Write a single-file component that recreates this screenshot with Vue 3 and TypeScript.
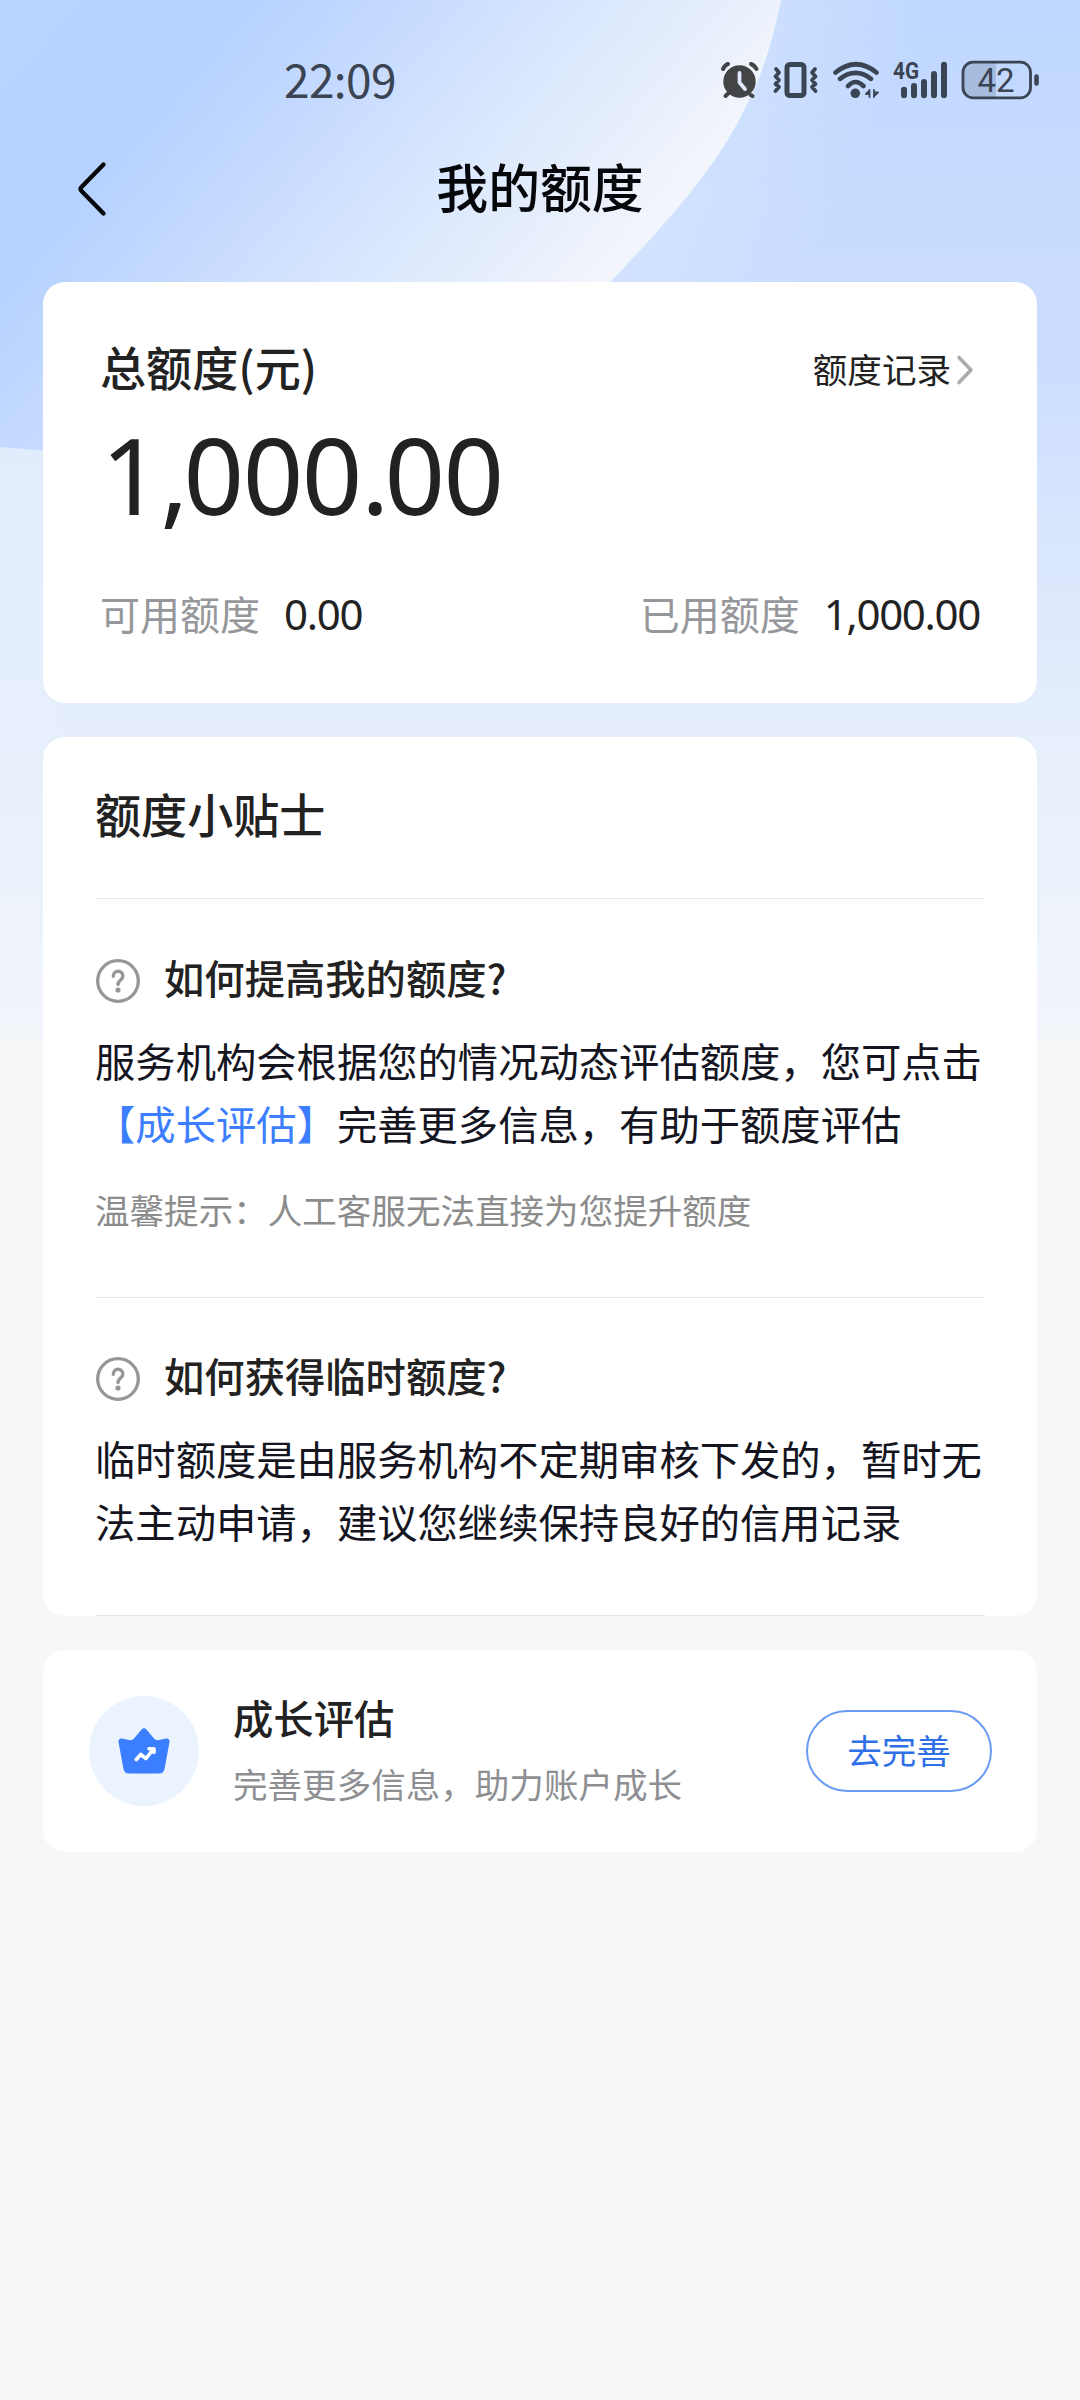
<script setup lang="ts">
interface Tip {
  question: string
  before: string
  link?: string
  after?: string
  note?: string
}

const tips: Tip[] = [
  {
    question: '如何提高我的额度?',
    before: '服务机构会根据您的情况动态评估额度，您可点击',
    link: '【成长评估】',
    after: '完善更多信息，有助于额度评估',
    note: '温馨提示：人工客服无法直接为您提升额度',
  },
  {
    question: '如何获得临时额度?',
    before: '临时额度是由服务机构不定期审核下发的，暂时无法主动申请，建议您继续保持良好的信用记录',
  },
]
</script>

<template>
  <div class="screen">
    <svg class="backdrop" viewBox="0 0 1080 1040" aria-hidden="true">
      <defs>
        <linearGradient id="base" x1="0" y1="0" x2="0" y2="1040" gradientUnits="userSpaceOnUse">
          <stop offset="0" stop-color="#bfd7ff" />
          <stop offset=".2" stop-color="#c8dcff" />
          <stop offset=".35" stop-color="#cbddff" />
          <stop offset=".5" stop-color="#d8e5fd" />
          <stop offset=".72" stop-color="#e7effc" />
          <stop offset="1" stop-color="#f2f5fa" />
        </linearGradient>
        <linearGradient id="edge" x1="650" y1="60" x2="860" y2="160" gradientUnits="userSpaceOnUse">
          <stop offset="0" stop-color="#dbe8fe" stop-opacity=".75" />
          <stop offset="1" stop-color="#dbe8fe" stop-opacity="0" />
        </linearGradient>
        <linearGradient id="sweep" x1="0" y1="0" x2="486" y2="416" gradientUnits="userSpaceOnUse">
          <stop offset="0" stop-color="#b7d3ff" />
          <stop offset=".3" stop-color="#b6d2ff" />
          <stop offset=".5" stop-color="#c7dbff" />
          <stop offset=".66" stop-color="#d6e5fe" />
          <stop offset=".86" stop-color="#e6eefc" />
          <stop offset="1" stop-color="#f2f5fb" />
        </linearGradient>
        <linearGradient id="leftglow" x1="0" y1="440" x2="0" y2="740" gradientUnits="userSpaceOnUse">
          <stop offset="0" stop-color="#e1ecfd" />
          <stop offset="1" stop-color="#e7effc" />
        </linearGradient>
      </defs>
      <rect width="1080" height="1040" fill="url(#base)" />
      <rect x="600" width="480" height="300" fill="url(#edge)" />
      <rect y="440" width="60" height="300" fill="url(#leftglow)" />
      <path d="M0 0H780C771 45 760 78 746.600 103C725 150 690 198 609 282C440 410 220 470 0 447Z" fill="url(#sweep)" />
      <path d="M780 0C771 45 760 78 746.600 103C725 150 690 198 609 282" fill="none" stroke="#f4f7fd" stroke-width="2" stroke-opacity=".8" />
    </svg>

    <header class="status">
      <span class="time">22:09</span>
      <svg class="status-icons" viewBox="0 0 330 44" fill="none" stroke="#3b4452" stroke-linecap="round" stroke-linejoin="round">
        <g>
          <circle cx="19.500" cy="21.500" r="16.200" fill="#434446" stroke="none" />
          <path d="M8.500 33L5.500 36M30.500 35L32.500 36" stroke="#434446" stroke-width="4" />
          <path d="M3 9Q5 5 8 4M31 4Q34 5 36.500 9" stroke="#434446" stroke-width="4" />
          <path d="M19.500 13V22.500L25 29" stroke="#dfe9fb" stroke-width="3.800" />
        </g>
        <rect x="67" y="4.500" width="17" height="31" rx="3" stroke-width="5" />
        <path d="M56 9L59 12.500L55.500 16.500L59 20L55.500 24L59 27L55.500 31M95 9L92 12.500L95.500 16.500L92 20L95.500 24L92 27L95.500 31" stroke-width="3.800" />
        <g stroke-width="4.700">
          <path d="M115.500 12.500Q136 -4 156.500 12.500M120 18.800Q135.500 7 151 18.800M128 26Q135.500 18 143.500 26" />
          <circle cx="135.300" cy="33.300" r="4.800" fill="#3b4452" stroke="none" />
          <path d="M149.500 30V37M149.500 30.500L146 34H149.500M154 37V30M154 36L158 32.500H154" stroke-width="1.800" />
        </g>
        <text class="net" x="173" y="19" textLength="26" lengthAdjust="spacingAndGlyphs">4G</text>
        <path d="M184 29.700V35.300M194 26V35.300M204 22V35.300M214 14V35.300M224 4.700V35.300" stroke-width="6" />
        <path d="M254 3H276V37H254Q244 37 244 27V13Q244 3 254 3Z" fill="#a5bcdf" stroke="none" />
        <rect x="243" y="2.200" width="67.500" height="35.600" rx="10" stroke-width="2.800" />
        <path d="M316.500 16.500V23.500" stroke-width="4.500" />
        <text class="level" x="276" y="31.500" text-anchor="middle">42</text>
      </svg>
    </header>

    <nav class="navbar">
      <svg class="back" viewBox="0 0 30 56" fill="none" stroke="#05070b" stroke-width="4.400" stroke-linecap="round" stroke-linejoin="round">
        <path d="M26.500 3.500L4.500 26Q2.500 28 4.500 30L26.500 52.500" />
      </svg>
      <h1>我的额度</h1>
    </nav>

    <main>
      <section class="card quota">
        <div class="quota-head">
          <h2>总额度(元)</h2>
          <a class="records"><span>额度记录</span><svg viewBox="0 0 18 32" fill="none" stroke="#ababab" stroke-width="3.600" stroke-linecap="round" stroke-linejoin="round"><path d="M3 3.500L15 16L3 28.500" /></svg></a>
        </div>
        <div class="total">1<i>,</i>000<i>.</i>00</div>
        <div class="quota-foot">
          <span class="pair"><span class="label">可用额度</span><span class="num">0.00</span></span>
          <span class="pair"><span class="label">已用额度</span><span class="num">1,000.00</span></span>
        </div>
      </section>

      <section class="card tips">
        <h2>额度小贴士</h2>
        <article v-for="tip in tips" :key="tip.question" class="tip">
          <div class="question">
            <svg viewBox="0 0 44 44" fill="none" stroke="#96979b" stroke-linecap="round">
              <circle cx="22" cy="22" r="20.300" stroke-width="3.300" />
              <path d="M17.300 17.200C17.300 10.600 26.900 10.600 26.900 17C26.900 21 22 21 22 25.500" stroke-width="3.400" />
              <circle cx="22" cy="31" r="2.600" fill="#96979b" stroke="none" />
            </svg>
            <h3>{{ tip.question }}</h3>
          </div>
          <p>{{ tip.before }}<a v-if="tip.link">{{ tip.link }}</a>{{ tip.after }}</p>
          <small v-if="tip.note">{{ tip.note }}</small>
        </article>
      </section>

      <section class="card growth">
        <div class="badge">
          <svg viewBox="0 0 52 46">
            <path d="M23.300 1.700Q26 -1 28.700 1.700L36 10.500Q38 13 41 12L48 10.500Q52 10.500 51.500 14L46.500 41Q45.500 45.500 41 45.500H11Q6.500 45.500 5.500 41L.5 14Q0 10.500 4 10.500L11 12Q14 13 16 10.500Z" fill="#3b7eff" />
            <path d="M18.200 31.500L22.800 26.500L28 30.500L35 21.500M31 20.800H36V24.500" fill="none" stroke="#fff" stroke-width="3.600" stroke-linecap="round" stroke-linejoin="round" />
          </svg>
        </div>
        <div class="growth-text">
          <h3>成长评估</h3>
          <span>完善更多信息，助力账户成长</span>
        </div>
        <button type="button">去完善</button>
      </section>
    </main>
  </div>
</template>

<style>
body {
  margin: 0;
  background: #f5f7f9;
}
</style>

<style scoped>
.screen {
  position: relative;
  width: 1080px;
  height: 2400px;
  overflow: hidden;
  background: #f5f7f9;
  color: #222;
  font-family: "Noto Sans CJK SC", sans-serif;
}
.backdrop {
  position: absolute;
  top: 0;
  left: 0;
  width: 1080px;
  height: 1040px;
}
.status,
.navbar,
main {
  position: relative;
}
h1, h2, h3, p {
  margin: 0;
  font-weight: 500;
}
.status {
  display: flex;
  justify-content: space-between;
  height: 132px;
  padding: 60px 30px 0 284px;
  box-sizing: border-box;
}
.time {
  color: #3b4452;
  font-size: 46px;
  line-height: 37px;
  letter-spacing: -.6px;
}
.status-icons {
  width: 330px;
  height: 44px;
  overflow: visible;
}
.net {
  fill: #3b4452;
  stroke: none;
  font-family: Roboto, sans-serif;
  font-size: 24px;
  font-weight: 700;
}
.level {
  fill: #3b4452;
  stroke: none;
  font-family: Roboto, sans-serif;
  font-size: 33px;
}
.navbar {
  display: flex;
  align-items: center;
  justify-content: center;
  height: 114px;
  margin-bottom: 36px;
}
.back {
  position: absolute;
  left: 77px;
  top: 29px;
  width: 30px;
  height: 56px;
}
h1 {
  margin-bottom: 6px;
  color: #05070b;
  font-size: 51.84px;
  line-height: 76px;
}
main {
  display: flex;
  flex-direction: column;
  gap: 34px;
  padding: 0 43px;
}
.card {
  box-sizing: border-box;
  border-radius: 22px;
  background: #fff;
}
.quota {
  height: 421px;
  padding: 53px 57px 0 57px;
}
.quota-head {
  display: flex;
  align-items: center;
  justify-content: space-between;
  height: 68px;
}
h2 {
  font-size: 46.08px;
  line-height: 68px;
}
.quota-head h2 {
  margin-bottom: 6px;
}
.records {
  display: flex;
  align-items: center;
  font-size: 34.56px;
  line-height: 50px;
  padding: 2px 6px 0 0;
}
.records span {
  margin-bottom: 4px;
}
.records svg {
  width: 18px;
  height: 32px;
  margin-left: 5px;
}
.total {
  height: 140px;
  padding-left: 1px;
  font-family: "Noto Sans", sans-serif;
  font-size: 106px;
  line-height: 142px;
  letter-spacing: -1.500px;
}
.total i {
  font-style: normal;
  letter-spacing: -5px;
}
.quota-foot {
  display: flex;
  justify-content: space-between;
  margin-top: 39px;
}
.pair {
  display: flex;
  align-items: center;
  gap: 24px;
  line-height: 60px;
}
.label {
  color: #96979b;
  font-size: 40px;
}
.num {
  margin-top: 2px;
  font-family: "Noto Sans", sans-serif;
  font-size: 42px;
  letter-spacing: -1.300px;
}
.tips {
  height: 879px;
  padding: 42px 52px 0 53px;
}
.tip {
  box-sizing: border-box;
  border-top: 1px solid #e9e9ea;
}
.tips h2 {
  margin-bottom: 51px;
  margin-left: -1px;
}
.tip:nth-of-type(1) {
  height: 399px;
}
.tip:nth-of-type(2) {
  height: 319px;
  border-bottom: 1px solid #e3e4e6;
}
.question {
  display: flex;
  align-items: center;
  gap: 24px;
  padding-top: 48px;
}
.tip:nth-of-type(2) .question {
  padding-top: 47px;
}
.question h3 {
  margin-bottom: 7px;
}
.question svg {
  width: 44px;
  height: 44px;
}
h3 {
  font-size: 40.320px;
  line-height: 60px;
}
p {
  margin: 14px -4px 0 -1px;
  color: #14151f;
  font-size: 40.320px;
  font-weight: 400;
  line-height: 63.400px;
}
p a {
  color: #3b7eff;
}
small {
  display: block;
  margin: 28px 0 0 -1px;
  color: #8c8c8c;
  font-size: 34.560px;
  line-height: 52px;
}
.growth {
  display: flex;
  align-items: center;
  height: 202px;
  padding: 0 45px 0 46px;
}
.badge {
  display: flex;
  align-items: center;
  justify-content: center;
  width: 110px;
  height: 110px;
  border-radius: 50%;
  background: #ebf3ff;
}
.badge svg {
  width: 52px;
  height: 46px;
}
.growth-text {
  flex: 1;
  margin: 0 0 4px 34px;
}
.growth-text span {
  display: block;
  margin-top: 8px;
  color: #8e8f92;
  font-size: 34.560px;
  line-height: 56px;
}
button {
  width: 186px;
  height: 82px;
  padding: 0 0 4px;
  border: 2px solid #6b9cf3;
  border-radius: 41px;
  background: #fff;
  color: #2f6fe8;
  font-family: inherit;
  font-size: 34.560px;
  line-height: 74px;
}
</style>
